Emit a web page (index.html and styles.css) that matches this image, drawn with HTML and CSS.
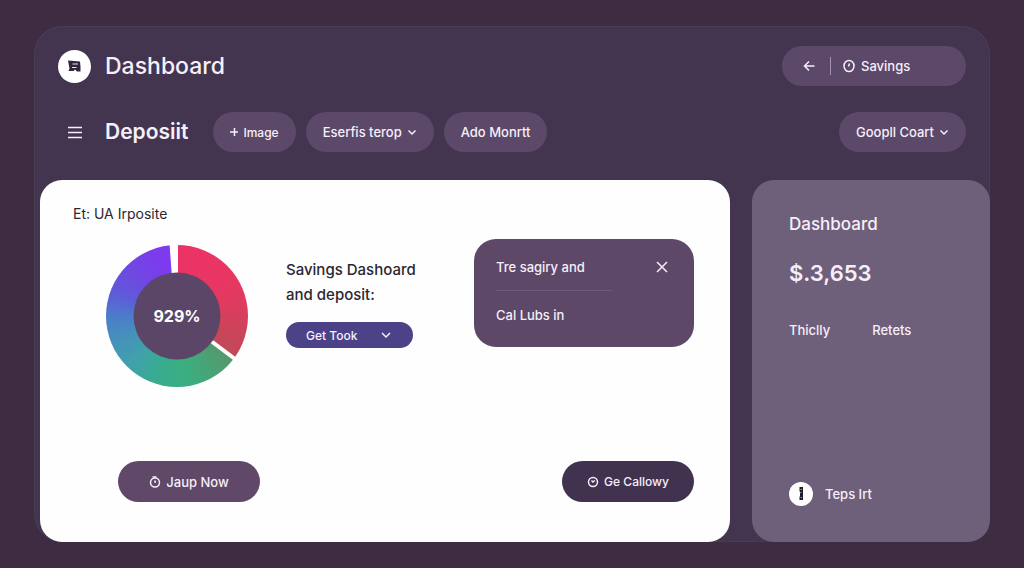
FILE: index.html
```html
<!DOCTYPE html>
<html lang="en">
<head>
<meta charset="UTF-8">
<meta name="viewport" content="width=device-width, initial-scale=1">
<title>Dashboard</title>
	<link rel="stylesheet" href="styles.css">
</head>
<body>

	<div class="panel">
		<header class="header">
			<svg class="logo" viewBox="0 0 33 33" aria-hidden="true">
				<circle cx="16.500" cy="16.500" r="16.500" fill="#fff"/>
				<path d="M10 10.500l12 1 .5 5.500v4.500h-3.500l-2-2-1.500 1.500H10.500l1-2.500z" fill="#30263c"/>
				<path d="M14.500 14h5.500M14 17.500h4.500" stroke="#e8e4ee" stroke-width="1" fill="none"/>
			</svg>
			<h1>Dashboard</h1>
			<div class="pill search">
				<button class="back" aria-label="Back">
					<svg width="12" height="12" viewBox="0 0 12 12"><path d="M11.500 6H1.500M6 1.500L1.500 6L6 10.500"/></svg>
				</button>
				<a class="savings" href="#">
					<svg width="12" height="14" viewBox="0 0 12 14"><ellipse cx="6" cy="7" rx="5" ry="5.500"/><path d="M6.500 4.500L5.500 7.500"/></svg>
					Savings
				</a>
			</div>
		</header>

		<nav class="toolbar">
			<button class="menu" aria-label="Menu">
				<svg width="14" height="13" viewBox="0 0 14 13"><path d="M0 1.500h14M0 6.500h14M0 11.500h14"/></svg>
			</button>
			<h2>Deposiit</h2>
			<div class="actions">
				<button class="pill image">
					<svg width="8" height="10" viewBox="0 0 8 10"><path d="M4.500 1v8M0 5h8"/></svg>
					Image
				</button>
				<button class="pill">
					Eserfis terop
					<svg width="10" height="7" viewBox="0 0 10 7"><path d="M1.500 1.500L5 5l3.500-3.500"/></svg>
				</button>
				<button class="pill">Ado Monrtt</button>
			</div>
			<button class="pill account">
				Goopll Coart
				<svg width="10" height="7" viewBox="0 0 10 7"><path d="M1.500 1.500L5 5l3.500-3.500"/></svg>
			</button>
		</nav>

		<div class="content">
			<main class="card">
				<h3>Et: UA Irposite</h3>
				<div class="overview">
					<div class="donut">
						<svg viewBox="0 0 142 142" aria-hidden="true">
							<path d="M63.500-1h8.500v40h-5.500z" fill="#fff"/>
							<path d="M99 91.500l32 24" stroke="#fff" stroke-width="4"/>
							<circle cx="71" cy="71" r="43.500" fill="#5c4667"/>
						</svg>
						<span>929%</span>
					</div>
					<div class="summary">
						<p>Savings Dashoard<br>and deposit:</p>
						<button class="track">
							Get Took
							<svg width="10" height="7" viewBox="0 0 10 7"><path d="M1 1l4 4 4-4"/></svg>
						</button>
					</div>
					<div class="popup">
						<div class="popup-top">
							<span>Tre sagiry and</span>
							<button class="close" aria-label="Close">
								<svg width="12" height="12" viewBox="0 0 12 12"><path d="M1 1l10 10M11 1L1 11"/></svg>
							</button>
						</div>
						<hr>
						<span>Cal Lubs in</span>
					</div>
				</div>
				<div class="buttons">
					<button class="big">
						<svg width="12" height="12" viewBox="0 0 12 12"><circle cx="6" cy="6.500" r="4.500"/><path d="M3.500 1h4M6 4.500v1.500h1"/></svg>
						Jaup Now
					</button>
					<button class="big dark">
						<svg width="12" height="12" viewBox="0 0 12 12"><circle cx="6" cy="6" r="4.500"/><path d="M4.500 4.500l1.500 1.500L8 4.500"/></svg>
						Ge Callowy
					</button>
				</div>
			</main>

			<aside class="side">
				<h3>Dashboard</h3>
				<strong>$.3,653</strong>
				<div class="links">
					<a href="#">Thiclly</a>
					<a href="#">Retets</a>
				</div>
				<a class="tips" href="#">
					<svg width="24" height="24" viewBox="0 0 24 24">
						<circle cx="12" cy="12" r="12" fill="#fff" stroke="none"/>
						<path d="M10.500 5h3.500v13h-3.500v-3l.5-1v-4l-.5-1z" fill="#211b2b" stroke="none"/>
						<path d="M11.500 7.500h1.500M11 10.500h1.500M11.500 15.500h1.500" stroke="#999" stroke-width="1"/>
					</svg>
					Teps Irt
				</a>
			</aside>
		</div>
	</div>

</body>
</html>
```
FILE: styles.css
```css
*{
	box-sizing: border-box;
}
body{
	margin: 0;
	min-height: 100vh;
	padding: 26px 34px;
	display: flex;
	background-color: #3d2c42;
	color: #f6effa;
	font-family: Inter, "Liberation Sans", sans-serif;
	font-size: 13px;
	font-weight: 500;
}
h1, h2, h3, p{
	margin: 0;
	font-weight: 500;
}
button{
	border: 0;
	padding: 0;
	background: none;
	color: inherit;
	font: inherit;
	cursor: pointer;
}
a{
	color: inherit;
	text-decoration: none;
}
button svg, a svg{
	flex: none;
	fill: none;
	stroke: currentColor;
	stroke-width: 1.5;
}

.panel{
	flex: 1;
	display: flex;
	flex-direction: column;
	border-radius: 28px;
	background-color: #43344f;
	box-shadow: inset 0 0 0 1px #4b3c56;
}
.header, .toolbar{
	display: flex;
	align-items: center;
	padding: 0 24px;
}
.header{
	padding-top: 20px;
}
.toolbar{
	padding-top: 26px;
}
.logo{
	width: 33px;
	height: 33px;
	margin-right: 14px;
}
h1, h2{
	font-size: 23px;
	line-height: 32px;
}
h2{
	font-size: 21px;
	font-weight: 600;
}
.pill{
	display: flex;
	align-items: center;
	gap: 5px;
	height: 40px;
	padding: 0 17px;
	border-radius: 20px;
	background-color: #5c4868;
}
.image{
	font-size: 12px;
}
.search{
	width: 184px;
	margin-left: auto;
	padding: 0 21px;
	gap: 14px;
}
.back{
	display: flex;
	align-items: center;
	height: 18px;
	padding-right: 15px;
	border-right: 1px solid #a493af;
}
.savings{
	display: flex;
	align-items: center;
	gap: 6px;
	margin-left: -2px;
}
.menu{
	display: flex;
	width: 47px;
	padding-left: 10px;
}
.actions{
	display: flex;
	gap: 10px;
	margin-left: 25px;
}
.account{
	margin-left: auto;
}

.content{
	flex: 1;
	display: flex;
	gap: 22px;
	margin-top: 28px;
	padding-left: 6px;
}
.card{
	flex: 1;
	display: flex;
	flex-direction: column;
	padding: 24px 36px 40px 33px;
	border-radius: 22px;
	background-color: #fefefe;
	color: #2b2730;
}
.card h3{
	font-size: 14px;
	line-height: 20px;
	font-weight: 400;
}
.overview{
	display: flex;
	align-items: flex-start;
	margin-top: 15px;
	padding-left: 33px;
}
.donut{
	display: grid;
	place-items: center;
	width: 142px;
	height: 142px;
	margin-top: 6px;
	border-radius: 50%;
	background: conic-gradient(#ea3366 0deg, #e83763 60deg, #c94557 110deg, #c04b58 126deg,
		#55986c 127deg, #3bae80 170deg, #38ab90 200deg, #40a0ad 225deg, #4690bc 250deg,
		#4b7ccb 270deg, #5f5bd9 290deg, #7048e2 315deg, #7d3aee 345deg);
}
.donut svg, .donut span{
	grid-area: 1 / 1;
}
.donut svg{
	width: 100%;
}
.donut span{
	color: #fff;
	font-size: 16px;
	font-weight: 700;
}
.summary{
	margin: 18px 0 0 38px;
}
.summary p{
	font-size: 15px;
	line-height: 25px;
}
.track{
	display: flex;
	align-items: center;
	justify-content: space-between;
	width: 127px;
	height: 26px;
	margin-top: 15px;
	padding: 0 22px 0 20px;
	border-radius: 13px;
	background-color: #4b4288;
	color: #f6effa;
	font-size: 12px;
}
.popup{
	width: 220px;
	margin-left: auto;
	padding: 18px 24px 22px 22px;
	border-radius: 22px;
	background-color: #5d4868;
	color: #f6effa;
	line-height: 20px;
}
.popup-top{
	display: flex;
	align-items: center;
	justify-content: space-between;
}
.close{
	display: flex;
	padding: 2px;
}
.popup hr{
	width: 116px;
	height: 1px;
	margin: 13px 0 14px;
	border: 0;
	background-color: #705b79;
}
.buttons{
	display: flex;
	justify-content: space-between;
	margin-top: auto;
	padding-left: 45px;
}
.big{
	display: flex;
	align-items: center;
	justify-content: center;
	gap: 5px;
	width: 142px;
	height: 41px;
	border-radius: 21px;
	background-color: #5f4868;
	color: #f6effa;
}
.dark{
	width: 132px;
	background-color: #41334f;
	font-size: 12px;
}

.side{
	width: 238px;
	display: flex;
	flex-direction: column;
	padding: 32px 36px 36px 37px;
	border-radius: 22px;
	background-color: #6e5f7a;
}
.side h3{
	font-size: 17px;
	line-height: 24px;
}
.side strong{
	margin-top: 22px;
	font-size: 22px;
	line-height: 30px;
	font-weight: 600;
}
.links{
	display: flex;
	gap: 42px;
	margin-top: 32px;
	line-height: 20px;
}
.tips{
	display: flex;
	align-items: center;
	gap: 12px;
	margin-top: auto;
}
```
